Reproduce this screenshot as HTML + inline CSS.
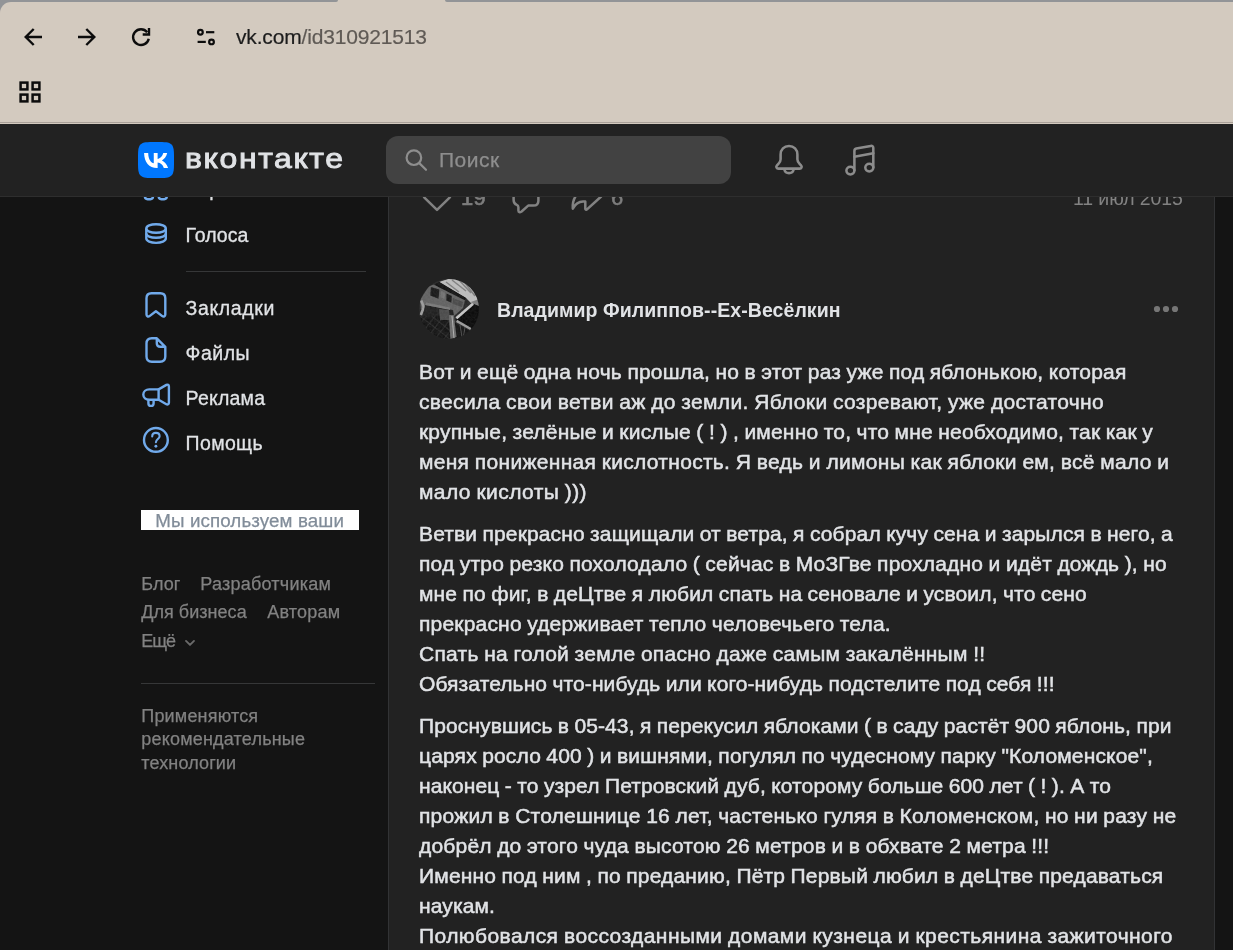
<!DOCTYPE html>
<html lang="ru">
<head>
<meta charset="utf-8">
<title>vk.com/id310921513</title>
<style>
*{box-sizing:border-box;margin:0;padding:0}
html,body{width:1233px;height:950px;overflow:hidden;background:#141414;font-family:"Liberation Sans",sans-serif;}
body{position:relative}
.abs{position:absolute}
#text,#sidebar,.meta,#name,#wordmark,#search span,.url{will-change:transform}
svg{position:absolute;overflow:visible}
/* browser chrome */
#chrome{position:absolute;left:0;top:0;width:1233px;height:124px;background:#d3cabf;z-index:10}
#strip-l{position:absolute;left:0;top:0;width:338px;height:2px;background:#929497;border-bottom-right-radius:2px}
#strip-r{position:absolute;left:445px;top:0;width:788px;height:2px;background:#929497;border-bottom-left-radius:2px}
#corner{position:absolute;left:0;top:0;width:12px;height:14px;background:#929497}
#corner i{position:absolute;left:0;top:2px;width:24px;height:24px;background:#d3cabf;border-top-left-radius:11px}
#chrome-line{position:absolute;left:0;top:122px;width:1233px;height:1px;background:#aaa199}
.url{position:absolute;left:235.8px;top:23.6px;font-size:21px;line-height:26px;color:#1c1c1c;white-space:nowrap;letter-spacing:-0.17px;-webkit-text-stroke:0.2px}
.url span{color:#5f5a55}
/* vk header */
#vkhead{position:absolute;left:0;top:124px;width:1233px;height:73px;background:#222222;border-bottom:1px solid #2e2e2e;z-index:5}
#wordmark{position:absolute;left:185.2px;top:137.6px;font-size:28.5px;line-height:40px;font-weight:400;color:#e1e3e6;white-space:nowrap;-webkit-text-stroke:0.9px #e1e3e6;letter-spacing:1.45px;transform:scaleX(1.12);transform-origin:0 50%;z-index:6}
#search{position:absolute;left:386px;top:136px;width:345px;height:48px;border-radius:12px;background:#424242;z-index:6}
#search span{position:absolute;left:53.4px;top:11px;font-size:21px;line-height:26px;color:#8e8e8e;letter-spacing:0.5px;-webkit-text-stroke:0.25px}
/* sidebar */
.mi{position:absolute;left:185.6px;font-size:19.5px;line-height:30px;color:#e1e3e6;white-space:nowrap;-webkit-text-stroke:0.3px #e1e3e6}
.ft{position:absolute;font-size:18px;line-height:24px;color:#828282;white-space:nowrap;-webkit-text-stroke:0.25px}
.sep{position:absolute;height:1px;background:#363738}
/* post */
#col{position:absolute;left:388px;top:197px;width:827px;height:753px;background:#222222;border-left:1px solid #323335;border-right:1px solid #323335}
.ln{position:absolute;left:419px;font-size:21px;line-height:30px;color:#e1e3e6;white-space:nowrap;word-spacing:-0.6px;-webkit-text-stroke:0.5px #e1e3e6}
#name{position:absolute;left:497px;top:294.7px;font-size:19.5px;line-height:30px;font-weight:700;color:#e1e3e6;white-space:nowrap;letter-spacing:0.07px}
.meta{position:absolute;font-size:19.5px;line-height:24px;color:#828282;white-space:nowrap}
</style>
</head>
<body>

<div id="col"></div>

<!-- SIDEBAR -->
<div id="sidebar">
<svg width="30" height="30" style="left:141px;top:174px" viewBox="0 0 30 30" fill="none" stroke="#71aaeb" stroke-width="2.4"><rect x="3.9" y="3.9" width="8.1" height="8.1" rx="2.6"/><rect x="17.7" y="3.9" width="8.1" height="8.1" rx="2.6"/><rect x="3.9" y="17.1" width="8.1" height="8.1" rx="2.6"/><rect x="17.7" y="17.1" width="8.1" height="8.1" rx="2.6"/></svg>
<div class="mi" style="top:173.8px;left:184.4px">Сервисы</div>

<svg width="30" height="30" style="left:141px;top:218px" viewBox="141 218 30 30" fill="none" stroke="#71aaeb" stroke-width="2.4"><ellipse cx="156.05" cy="228.5" rx="9.75" ry="4.3"/><path d="M146.3 228.5V238.6C146.3 241 150.7 242.9 156.05 242.9S165.8 241 165.8 238.6V228.5"/><path d="M146.3 233.5C146.3 235.9 150.7 237.8 156.05 237.8S165.8 235.9 165.8 233.5"/></svg>
<div class="mi" style="top:220px;letter-spacing:0.0px">Голоса</div>

<div class="sep" style="left:186px;top:271px;width:180px"></div>

<svg width="30" height="30" style="left:141px;top:290px" viewBox="141 290 30 30" fill="none" stroke="#71aaeb" stroke-width="2.4" stroke-linejoin="round" stroke-linecap="round"><path d="M146.5 298.2C146.5 295.4 148 293.2 151.5 293.2H160.3C163.8 293.2 165.3 295.4 165.3 298.2V314.6C165.3 316.3 163.6 317.1 162.3 316.1L155.9 311.2L149.5 316.1C148.2 317.1 146.5 316.3 146.5 314.6Z"/></svg>
<div class="mi" style="top:293px;letter-spacing:0.62px">Закладки</div>

<svg width="30" height="30" style="left:141px;top:335px" viewBox="141 335 30 30" fill="none" stroke="#71aaeb" stroke-width="2.4" stroke-linejoin="round" stroke-linecap="round"><path d="M156.8 338.3H151.8C148.2 338.3 146.5 340.3 146.5 343.6V356.5C146.5 359.8 148.2 361.8 151.8 361.8H160C163.6 361.8 165.3 359.8 165.3 356.5V346.8ZM156.8 338.3L165.3 346.8H160.3C158 346.8 156.8 345.6 156.8 343.3Z"/></svg>
<div class="mi" style="top:338px;letter-spacing:0.5px">Файлы</div>

<svg width="32" height="30" style="left:140px;top:380px" viewBox="140 380 32 30" fill="none" stroke="#71aaeb" stroke-width="2.4" stroke-linejoin="round" stroke-linecap="round"><path d="M158.6 389.4H149.2C145.9 389.4 143.3 391.6 143.3 394.6S145.9 399.8 149.2 399.8H158.6"/><path d="M158.6 389.4L166.4 384.9C167.6 384.2 168.9 385 168.9 386.4V402.8C168.9 404.2 167.6 405 166.4 404.3L158.6 399.8Z"/><path d="M148.4 400.2V403.2C148.4 404.8 149.6 405.9 151 405.9S153.6 404.8 153.6 403.2V400.2"/></svg>
<div class="mi" style="top:383px;letter-spacing:0.2px">Реклама</div>

<svg width="30" height="30" style="left:141px;top:425px" viewBox="141 425 30 30" fill="none" stroke="#71aaeb" stroke-width="2.4" stroke-linecap="round" stroke-linejoin="round"><circle cx="155.9" cy="439.9" r="11.9"/><path d="M152.2 436.4C152.2 434.3 153.8 432.9 155.9 432.9S159.6 434.3 159.6 436.2C159.6 438.9 155.9 439.2 155.9 442.3" stroke-width="2.1"/><circle cx="155.9" cy="446.3" r="1.45" fill="#71aaeb" stroke="none"/></svg>
<div class="mi" style="top:428px;letter-spacing:0.35px">Помощь</div>

<div class="abs" style="left:141px;top:510px;width:218px;height:20px;background:#ffffff;overflow:hidden"><div class="ft" style="left:14.3px;top:-1.5px;color:#818c99;font-size:18.75px;letter-spacing:0.105px">Мы используем ваши</div></div>
<div class="ft" style="left:141.3px;top:571.7px;letter-spacing:0.02px">Блог</div>
<div class="ft" style="left:200.3px;top:571.7px;letter-spacing:0.235px">Разработчикам</div>
<div class="ft" style="left:141.3px;top:600.3px;letter-spacing:0.034px">Для бизнеса</div>
<div class="ft" style="left:267.3px;top:600.3px;letter-spacing:0.196px">Авторам</div>
<div class="ft" style="left:141.3px;top:628.8px;letter-spacing:-1.04px">Ещё</div>
<svg width="12" height="8" style="left:184.2px;top:638.6px" viewBox="0 0 12 8" fill="none" stroke="#6a6a6a" stroke-width="1.9" stroke-linecap="round" stroke-linejoin="round"><path d="M2 1.9L6 5.9L10 1.9"/></svg>
<div class="sep" style="left:141px;top:683px;width:234px"></div>
<div class="ft" style="left:141.3px;top:703.7px;letter-spacing:0.183px">Применяются</div>
<div class="ft" style="left:141.3px;top:727px;letter-spacing:0.195px">рекомендательные</div>
<div class="ft" style="left:141.3px;top:750.5px;letter-spacing:0.129px">технологии</div>
</div>

<!-- POST -->
<svg width="36" height="36" style="left:419px;top:180px" viewBox="419 180 36 36" fill="none" stroke="#828282" stroke-width="2.5" stroke-linejoin="round"><path d="M437 209.9L424.4 197.6C421.2 194.4 421.2 189.2 424.6 186.2C428 183.2 433.4 183.9 437 188.2C440.6 183.9 446 183.2 449.4 186.2C452.8 189.2 452.8 194.4 449.6 197.6Z"/></svg>
<div class="meta" style="left:460.5px;top:186.1px;font-size:22px;-webkit-text-stroke:0.6px;letter-spacing:0.3px;color:#7d7d7d">19</div>
<svg width="36" height="36" style="left:508px;top:180px" viewBox="508 180 36 36" fill="none" stroke="#828282" stroke-width="2.5" stroke-linejoin="round"><path d="M518.5 184.5H533.5Q538.4 184.5 538.4 189.4V200.7Q538.4 205.6 533.5 205.6H528.2L521.6 211.5Q518.6 213.5 518.4 210.3V207.2Q518.3 205.5 516.8 204.9Q513.6 203.8 513.6 200V189.4Q513.6 184.5 518.5 184.5Z"/></svg>
<svg width="36" height="36" style="left:568px;top:180px" viewBox="568 180 36 36" fill="none" stroke="#828282" stroke-width="2.5" stroke-linejoin="round" stroke-linecap="round"><path d="M585.3 189.5V183.6C585.3 182.7 586.3 182.3 587 182.9L600.9 195.1C601.4 195.6 601.4 196.3 600.9 196.8L587 209.4C586.3 210 585.3 209.6 585.3 208.7V201.6C579.3 200.6 575.5 203.4 572.8 208.6C572 199.8 577 190.5 585.3 189.5Z"/></svg>
<div class="meta" style="left:610.8px;top:186.1px;font-size:22px;-webkit-text-stroke:0.6px;color:#7d7d7d">6</div>
<div class="meta" style="left:1073.2px;top:186.2px;letter-spacing:-0.1px">11 июл 2015</div>

<!-- avatar -->
<svg width="60" height="60" style="left:419px;top:279px" viewBox="0 0 60 60">
<defs><clipPath id="avc"><circle cx="30" cy="30" r="30"/></clipPath>
<filter id="avb" x="-10%" y="-10%" width="120%" height="120%"><feGaussianBlur stdDeviation="0.55"/></filter>
<filter id="avn" x="0" y="0" width="100%" height="100%"><feTurbulence type="fractalNoise" baseFrequency="0.45" numOctaves="2" seed="7" result="n"/><feColorMatrix in="n" type="matrix" values="0 0 0 0 1  0 0 0 0 1  0 0 0 0 1  0.9 0.9 0 0 -0.62"/></filter>
<pattern id="hatch" width="7" height="7" patternUnits="userSpaceOnUse" patternTransform="rotate(38)"><rect width="7" height="7" fill="#181818"/><path d="M0 0H7M0 0V7" stroke="#3c3c3c" stroke-width="1"/></pattern>
</defs>
<g clip-path="url(#avc)">
<g filter="url(#avb)">
<rect x="-2" y="-2" width="64" height="64" fill="#2b2b2b"/>
<polygon points="1,21 10,7 21,4 46,21 44,29 35,37 2,30" fill="#636363"/>
<polygon points="20,3 35,-2 50,4 62,20 58,24 52,24 47,19" fill="#bcbcbc"/>
<path d="M27 3L40 13M33 1L47 12M40 1L52 14M46 4L56 17" stroke="#808080" stroke-width="1.5" fill="none"/>
<polygon points="52,23 60,20 60,30 55,27" fill="#7e7e7e"/>
<polygon points="15,5.8 20.4,3 47.4,19.2 45.8,21.3" fill="#131313"/>
<polygon points="11.9,7.9 20.4,10.6 19.5,19.8 11.2,16.6" fill="#1d1d1d"/>
<polygon points="27.5,14.6 32.9,16.9 32.4,23.8 27.3,21.5" fill="#1f1f1f"/>
<polygon points="22,12 26,13.5 25.5,20 21.6,18.6" fill="#737373"/>
<polygon points="34,19 44,23 43,28 33.5,25" fill="#4c4c4c"/>
<path d="M2.2 21.5L4.8 28L1.8 36" stroke="#9c9c9c" stroke-width="2.6" fill="none"/>
<polygon points="6,26 34,31 35,37 20,41 4,38" fill="#202020"/>
<polygon points="7,23.5 31,28.5 31,31 6.5,26" fill="#7a7a7a"/>
<polygon points="-2,38 30,36 33,62 -2,62" fill="url(#hatch)"/>
<polygon points="20,30 30,31 31,41 21,41" fill="#4e4e4e"/>
<polygon points="37,41 55,25 62,28 62,52 52,50" fill="#0b0b0b"/>
<polygon points="36,44 51,52 46,62 36,62" fill="#141414"/>
<path d="M37.4 39.3L54 24.8" stroke="#c4c4c4" stroke-width="2.7"/>
<path d="M37.6 41.9L51.8 50" stroke="#9c9c9c" stroke-width="2.4"/>
<polygon points="29.8,36 34.8,36 37.6,58 31.4,60" fill="#6a6a6a"/>
<path d="M33 37L35 59" stroke="#b5b5b5" stroke-width="0.9"/>
<path d="M41 46L43 58M46 48L44 60" stroke="#555" stroke-width="0.9"/>
</g>
<rect width="60" height="60" filter="url(#avn)" opacity="0.09"/>
</g></svg>
<div id="name">Владимир Филиппов--Ех-Весёлкин</div>
<svg width="30" height="10" style="left:1151px;top:304px" viewBox="1151 304 30 10"><circle cx="1157" cy="309" r="3.1" fill="#767676"/><circle cx="1166" cy="309" r="3.1" fill="#767676"/><circle cx="1175" cy="309" r="3.1" fill="#767676"/></svg>

<div id="text">
<div class="ln" style="top:357px;letter-spacing:0.179px">Вот и ещё одна ночь прошла, но в этот раз уже под яблонькою, которая</div>
<div class="ln" style="top:387px;letter-spacing:0.321px">свесила свои ветви аж до земли. Яблоки созревают, уже достаточно</div>
<div class="ln" style="top:417px;letter-spacing:0.187px">крупные, зелёные и кислые ( ! ) , именно то, что мне необходимо, так как у</div>
<div class="ln" style="top:447px;letter-spacing:0.301px">меня пониженная кислотность. Я ведь и лимоны как яблоки ем, всё мало и</div>
<div class="ln" style="top:477px;letter-spacing:0.401px">мало кислоты )))</div>
<div class="ln" style="top:519px;letter-spacing:0.130px">Ветви прекрасно защищали от ветра, я собрал кучу сена и зарылся в него, а</div>
<div class="ln" style="top:549px;letter-spacing:0.184px">под утро резко похолодало ( сейчас в МоЗГве прохладно и идёт дождь ), но</div>
<div class="ln" style="top:579px;letter-spacing:0.148px">мне по фиг, в деЦтве я любил спать на сеновале и усвоил, что сено</div>
<div class="ln" style="top:609px;letter-spacing:0.189px">прекрасно удерживает тепло человечьего тела.</div>
<div class="ln" style="top:639px;letter-spacing:0.267px">Спать на голой земле опасно даже самым закалённым !!</div>
<div class="ln" style="top:669px;letter-spacing:0.106px">Обязательно что-нибудь или кого-нибудь подстелите под себя !!!</div>
<div class="ln" style="top:711px;letter-spacing:0.110px">Проснувшись в 05-43, я перекусил яблоками ( в саду растёт 900 яблонь, при</div>
<div class="ln" style="top:741px;letter-spacing:0.153px">царях росло 400 ) и вишнями, погулял по чудесному парку &quot;Коломенское&quot;,</div>
<div class="ln" style="top:771px;letter-spacing:0.116px">наконец - то узрел Петровский дуб, которому больше 600 лет ( ! ). А то</div>
<div class="ln" style="top:801px;letter-spacing:0.223px">прожил в Столешнице 16 лет, частенько гуляя в Коломенском, но ни разу не</div>
<div class="ln" style="top:831px;letter-spacing:0.194px">добрёл до этого чуда высотою 26 метров и в обхвате 2 метра !!!</div>
<div class="ln" style="top:861px;letter-spacing:0.176px">Именно под ним , по преданию, Пётр Первый любил в деЦтве предаваться</div>
<div class="ln" style="top:891px;letter-spacing:0.123px">наукам.</div>
<div class="ln" style="top:921px;letter-spacing:0.425px">Полюбовался воссозданными домами кузнеца и крестьянина зажиточного</div>
</div>

<!-- VK HEADER -->
<div id="vkhead"></div>
<svg width="36" height="36" style="left:138px;top:142px;z-index:6" viewBox="0 0 100 100"><path d="M0 48C0 25.4 0 14.1 7 7C14.1 0 25.4 0 48 0H52C74.6 0 85.9 0 93 7C100 14.1 100 25.4 100 48V52C100 74.6 100 85.9 93 93C85.9 100 74.6 100 52 100H48C25.4 100 14.1 100 7 93C0 85.9 0 74.6 0 52Z" fill="#0077ff"/><path d="M53.2 72C30.4 72 17.4 56.4 16.9 30.4H28.3C28.7 49.5 37.1 57.6 43.8 59.3V30.4H54.5V46.9C61.1 46.2 68 38.7 70.3 30.4H81.1C79.3 40.6 71.8 48.1 66.5 51.2C71.8 53.7 80.3 60.2 83.6 72H71.7C69.2 64.1 62.9 58 54.5 57.2V72Z" fill="#fff"/></svg>
<div id="wordmark">вконтакте</div>
<div id="search"><svg width="30" height="30" style="left:15px;top:9px" viewBox="401 145 30 30" fill="none" stroke="#8e8e8e" stroke-width="2.2" stroke-linecap="round"><circle cx="413.9" cy="157.7" r="7.3"/><path d="M419.3 163.1L426 169.8"/></svg><span>Поиск</span></div>
<svg width="36" height="36" style="left:771px;top:142px;z-index:6" viewBox="771 142 36 36" fill="none" stroke="#8c8c8c" stroke-width="2.55" stroke-linejoin="round" stroke-linecap="round"><path d="M789 145.9C784 145.9 780.6 149.6 780.6 154.4V159.2C780.6 161 779.9 162.2 778.6 163.6L777 165.3C775.6 166.8 776.5 168.6 778.4 168.6H799.6C801.5 168.6 802.4 166.8 801 165.3L799.4 163.6C798.1 162.2 797.4 161 797.4 159.2V154.4C797.4 149.6 794 145.9 789 145.9Z"/><path d="M784.2 169.2C784.8 171.5 786.6 173.1 789 173.1S793.2 171.5 793.8 169.2"/></svg>
<svg width="36" height="36" style="left:842px;top:142px;z-index:6" viewBox="842 142 36 36" fill="none" stroke="#8c8c8c" stroke-width="2.55" stroke-linejoin="round" stroke-linecap="round"><path d="M854.4 170.3V150.9C854.4 149.6 855.1 148.8 856.3 148.5L870.7 145.9C872.2 145.6 873.3 146.5 873.3 148V167.5"/><path d="M854.4 156.8L873.3 153.2"/><ellipse cx="850.4" cy="170.6" rx="4" ry="3.8"/><ellipse cx="869.3" cy="167.6" rx="4" ry="3.8"/></svg>

<!-- BROWSER CHROME -->
<div id="chrome">
<div id="corner"><i></i></div>
<div id="strip-l"></div><div id="strip-r"></div>
<svg width="160" height="60" style="left:0;top:8px" viewBox="0 8 160 60" fill="none" stroke="#0c0c0c" stroke-width="2.4"><path d="M42 37H26.5M33.7 29L25.7 37L33.7 45"/><path d="M78 37H93.5M86.3 29L94.3 37L86.3 45"/><path d="M147.2 32.2A7.9 7.9 0 1 0 148.75 38.7"/><path d="M142.7 34.5H149V28"/></svg>
<svg width="30" height="30" style="left:191px;top:22px" viewBox="191 22 30 30" fill="none" stroke="#0c0c0c" stroke-width="2.2"><circle cx="200.4" cy="32.2" r="2.35"/><path d="M206 32.2H214.3"/><path d="M197.6 41.9H205.8"/><circle cx="211.5" cy="41.9" r="2.35"/></svg>
<div class="url">vk.com<span>/id310921513</span></div>
<svg width="24" height="24" style="left:18px;top:80px" viewBox="18 80 24 24" fill="none" stroke="#0c0c0c" stroke-width="2.5"><rect x="20.6" y="82.6" width="6.8" height="6.8"/><rect x="32.6" y="82.6" width="6.8" height="6.8"/><rect x="20.6" y="94.6" width="6.8" height="6.8"/><rect x="32.6" y="94.6" width="6.8" height="6.8"/></svg>
<div id="chrome-line"></div>
</div>

</body>
</html>
